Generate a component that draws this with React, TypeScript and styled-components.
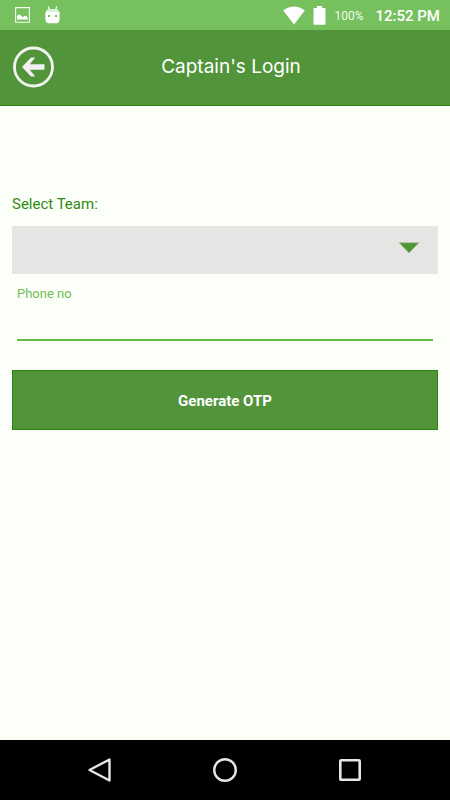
import React, { useState } from "react";
import styled, { createGlobalStyle } from "styled-components";

const GlobalStyle = createGlobalStyle`
  *, *::before, *::after { box-sizing: border-box; }
  body {
    margin: 0;
    background: #fcfff8;
    font-family: Roboto, "Liberation Sans", sans-serif;
  }
`;

const Screen = styled.div`
  display: flex;
  flex-direction: column;
  min-height: 100vh;
`;

const StatusBar = styled.div`
  display: flex;
  align-items: center;
  justify-content: space-between;
  height: 30px;
  padding: 0 10px 0 15px;
  background: #76c15d;
  color: #fff;
`;

const StatusGroup = styled.div<{ $gap: number }>`
  display: flex;
  align-items: center;
  gap: ${({ $gap }) => $gap}px;

  svg { display: block; }
`;

const BatteryLevel = styled.span`
  font-size: 12px;
  line-height: 30px;
  padding-top: 2px;
  margin-right: 4px;
  color: #f2faef;
`;

const Clock = styled.span`
  font-size: 15px;
  font-weight: 500;
  line-height: 30px;
  padding-top: 2px;
`;

const Header = styled.header`
  display: grid;
  grid-template-columns: 44px 1fr 32px;
  align-items: center;
  height: 76px;
  padding: 0 12px;
  background: #519439;
  border-bottom: 1px solid #2f8411;
`;

const BackButton = styled.button`
  padding: 0 0 2px;
  border: 0;
  background: none;
  cursor: pointer;

  svg { display: block; }
`;

const Title = styled.h1`
  margin: 0;
  padding-bottom: 2px;
  color: #fff;
  font-family: Inter, Roboto, sans-serif;
  font-size: 19px;
  font-weight: 400;
  line-height: 24px;
  text-align: center;
`;

const Form = styled.form`
  flex: 1;
  display: flex;
  flex-direction: column;
  padding: 88px 12px 24px;
`;

const TeamLabel = styled.label`
  color: #2f8a14;
  font-size: 15px;
  line-height: 20px;
  margin-bottom: 12px;
`;

const SelectBox = styled.div`
  display: grid;
  align-items: center;
  height: 48px;
  background: #e5e5e4;

  > * { grid-area: 1 / 1; }

  svg {
    justify-self: end;
    margin: 0 18px 4px 0;
    pointer-events: none;
  }
`;

const TeamSelect = styled.select`
  appearance: none;
  width: 100%;
  height: 100%;
  padding: 0 48px 0 12px;
  border: 0;
  border-radius: 0;
  background: transparent;
  color: #2f8a14;
  font: inherit;
  font-size: 15px;
`;

const PhoneField = styled.div`
  display: flex;
  flex-direction: column;
  margin: 12px 5px 29px;
`;

const PhoneLabel = styled.label`
  color: #70bd58;
  font-size: 13px;
  line-height: 16px;
`;

const PhoneInput = styled.input`
  width: 100%;
  height: 39px;
  padding: 0;
  border: 0;
  border-bottom: 2px solid #64bd42;
  border-radius: 0;
  outline: none;
  background: transparent;
  color: #2f8a14;
  font: inherit;
  font-size: 15px;
`;

const SubmitButton = styled.button`
  height: 60px;
  padding: 2px 0 0;
  border: 1px solid #2f8411;
  background: #519439;
  color: #fff;
  font: inherit;
  font-size: 15px;
  font-weight: 700;
  cursor: pointer;
`;

const NavBar = styled.nav`
  display: flex;
  align-items: center;
  justify-content: center;
  gap: 101px;
  height: 60px;
  background: #000;
`;

const NavButton = styled.button`
  width: 24px;
  height: 24px;
  padding: 0;
  border: 0;
  background: none;
  cursor: pointer;

  svg { display: block; }
`;

const PictureIcon = () => (
  <svg width="15" height="16" viewBox="0 0 15 16" aria-hidden="true">
    <path d="M.6.6h13.8v14.6H.6z" fill="none" stroke="#f4fbf1" strokeWidth="1.1" />
    <path d="M2 12.6V9l1-1 1.2-.6L5.5 8l1.2 1.6L8 10l1.4-1 1.3-.3 1.1.8 1.2 1.4v1.7z" fill="#fff" />
  </svg>
);

const DroidIcon = () => (
  <svg width="15" height="18" viewBox="0 0 15 18" aria-hidden="true">
    <path d="M3.2.4l1.2 3.4M11.8.4l-1.2 3.4" stroke="#fff" strokeWidth="1.2" />
    <path d="M1 6.2Q1.2 3.2 4 3.1h7q2.8.1 3 3.1z" fill="#d9efd2" />
    <path d="M.4 6h14.2v7.4Q14.2 17.3 10.5 17.3h-6Q.8 17.3.4 13.4z" fill="#fff" />
    <path d="M3 8.9h2v2H3zM10 8.9h2v2h-2z" fill="#76c15d" />
  </svg>
);

const WifiIcon = () => (
  <svg width="22" height="19" viewBox="0 0 22 19" aria-hidden="true">
    <path d="M.2 4.4Q11-3.4 21.8 4.4L11 18.4z" fill="#fff" />
  </svg>
);

const BatteryIcon = () => (
  <svg width="13" height="19" viewBox="0 0 13 19" aria-hidden="true">
    <path d="M4 0h5v2h2.5q1 0 1 1v15q0 .8-1 .8h-10q-1 0-1-.8V3q0-1 1-1H4z" fill="#fff" />
  </svg>
);

const BackIcon = () => (
  <svg width="43" height="44" viewBox="0 0 43 44" aria-hidden="true">
    <circle cx="21.5" cy="22" r="19" fill="none" stroke="#f0f3ee" strokeWidth="2.8" />
    <path d="M10 22l9-9.500h4.300L17.800 19.300H32.500v5.400H17.800l5.500 6.800H19z" fill="#f0f0f0" />
  </svg>
);

const ArrowIcon = () => (
  <svg width="22" height="12" viewBox="0 0 22 12" aria-hidden="true">
    <path d="M1.2.8h19.600L11 11z" fill="#4c9632" stroke="#a9b5a4" strokeWidth=".7" />
  </svg>
);

export default function App() {
  const [phone, setPhone] = useState("");

  return (
    <Screen>
      <GlobalStyle />
      <StatusBar>
        <StatusGroup $gap={15}>
          <PictureIcon />
          <DroidIcon />
        </StatusGroup>
        <StatusGroup $gap={8}>
          <WifiIcon />
          <BatteryIcon />
          <BatteryLevel>100%</BatteryLevel>
          <Clock>12:52 PM</Clock>
        </StatusGroup>
      </StatusBar>
      <Header>
        <BackButton type="button" aria-label="Back">
          <BackIcon />
        </BackButton>
        <Title>Captain's Login</Title>
      </Header>
      <Form onSubmit={(event) => event.preventDefault()}>
        <TeamLabel htmlFor="team">Select Team:</TeamLabel>
        <SelectBox>
          <TeamSelect id="team" defaultValue="">
            <option value="" />
          </TeamSelect>
          <ArrowIcon />
        </SelectBox>
        <PhoneField>
          <PhoneLabel htmlFor="phone">Phone no</PhoneLabel>
          <PhoneInput
            id="phone"
            type="tel"
            value={phone}
            onChange={(event) => setPhone(event.target.value)}
          />
        </PhoneField>
        <SubmitButton type="submit">Generate OTP</SubmitButton>
      </Form>
      <NavBar aria-label="System">
        <NavButton type="button" aria-label="Back">
          <svg width="24" height="24" viewBox="0 0 24 24">
            <path d="M1.5 12L21.5 1.5v21z" fill="none" stroke="#e6e6e6" strokeWidth="2.4" strokeLinejoin="round" />
          </svg>
        </NavButton>
        <NavButton type="button" aria-label="Home">
          <svg width="24" height="24" viewBox="0 0 24 24">
            <circle cx="12" cy="12" r="10.8" fill="none" stroke="#e6e6e6" strokeWidth="2.4" />
          </svg>
        </NavButton>
        <NavButton type="button" aria-label="Recent apps">
          <svg width="24" height="24" viewBox="0 0 24 24">
            <rect x="2.3" y="2.3" width="19.4" height="19.4" rx=".8" fill="none" stroke="#e6e6e6" strokeWidth="2.6" />
          </svg>
        </NavButton>
      </NavBar>
    </Screen>
  );
}
